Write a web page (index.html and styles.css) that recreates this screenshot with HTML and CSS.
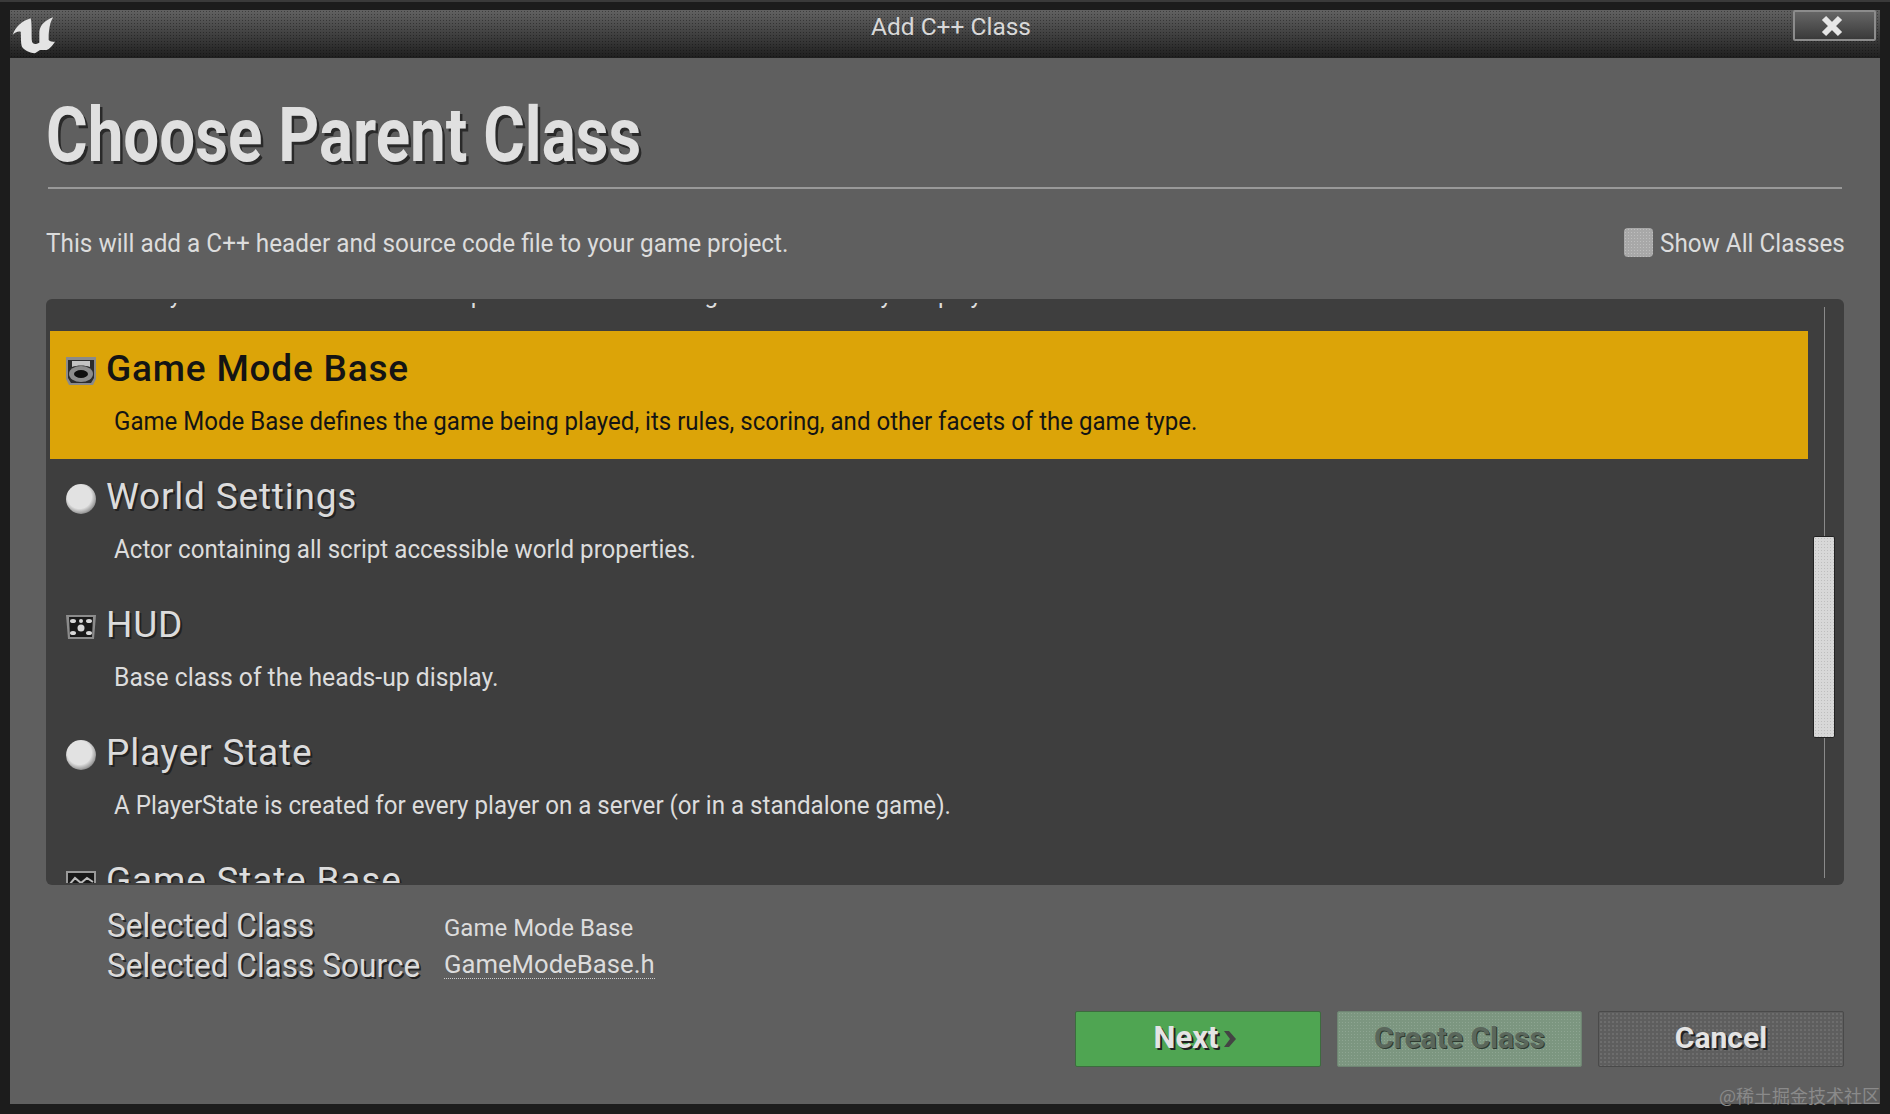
FILE: index.html
```html
<!DOCTYPE html>
<html lang="en">
<head>
    <meta charset="UTF-8">
    <meta name="viewport" content="width=device-width, initial-scale=1.0">
    <title>Add C++ Class</title>
    <link rel="stylesheet" href="styles.css">
</head>
<body>
    <div class="window">
        <div class="titlebar">
            <svg class="logo" viewBox="0 0 132 120">
                <path fill="#e4e4e4" d="M2 60C10 35 30 18 56 10C59 20 59 45 59 70C59 85 65 92 82 83L82 50C84 30 100 15 124 7C114 20 112 40 110 60L110 75C114 80 122 80 129 80C122 92 112 102 104 105L84 105L69 115C50 112 36 105 30 95C26 85 27 60 26 50C18 48 8 52 2 60Z"/>
            </svg>
            <span class="window-title">Add C++ Class</span>
            <button class="close-btn">
                <svg viewBox="0 0 24 24" width="24" height="24"><path d="M4 4L20 20M20 4L4 20" stroke="#e6e6e6" stroke-width="6"/></svg>
            </button>
        </div>

        <div class="content">
            <h1 class="heading"><span>Choose Parent Class</span></h1>
            <div class="divider"></div>

            <div class="intro">
                <p class="intro-text"><span>This will add a C++ header and source code file to your game project.</span></p>
                <label class="show-all"><span class="checkbox"></span><span class="show-all-text">Show All Classes</span></label>
            </div>

            <div class="panel">
                <ul class="class-list">
                    <li class="class-row cut-top">
                        <p class="class-desc"><span>A Player Controller is an actor responsible for controlling a Pawn used by the player.</span></p>
                    </li>
                    <li class="class-row selected">
                        <div class="class-head">
                            <svg class="class-icon" viewBox="0 0 32 30">
                                <path fill="#8a8a8a" d="M1 1H31V23L28 29H4L1 23Z"/>
                                <path fill="#2c2c2c" d="M3 4H29V22L26 27H6L3 22Z"/>
                                <path fill="#c4c4c4" d="M7 5H25V11C20 9 12 9 7 11Z"/>
                                <ellipse cx="16" cy="18" rx="12" ry="8" fill="#8c8c8c"/>
                                <ellipse cx="16" cy="18" rx="7" ry="4" fill="#0e0e0e"/>
                            </svg>
                            <h3 class="class-name">Game Mode Base</h3>
                        </div>
                        <p class="class-desc"><span>Game Mode Base defines the game being played, its rules, scoring, and other facets of the game type.</span></p>
                    </li>
                    <li class="class-row">
                        <div class="class-head">
                            <span class="ball-icon"></span>
                            <h3 class="class-name">World Settings</h3>
                        </div>
                        <p class="class-desc"><span>Actor containing all script accessible world properties.</span></p>
                    </li>
                    <li class="class-row">
                        <div class="class-head">
                            <svg class="class-icon" viewBox="0 0 32 30">
                                <path fill="#8c8c8c" d="M1 3H31L29 27H3Z"/>
                                <path fill="#1a1a1a" d="M4 5H28L27 25H5Z"/>
                                <g fill="#d8d8d8">
                                    <ellipse cx="8" cy="9" rx="3" ry="2"/>
                                    <ellipse cx="16" cy="9" rx="2" ry="2"/>
                                    <ellipse cx="24" cy="9" rx="3" ry="2"/>
                                    <ellipse cx="16" cy="16" rx="3.5" ry="3.5"/>
                                    <ellipse cx="8" cy="21" rx="3" ry="2"/>
                                    <ellipse cx="24" cy="21" rx="3" ry="2"/>
                                </g>
                            </svg>
                            <h3 class="class-name">HUD</h3>
                        </div>
                        <p class="class-desc hud-desc"><span>Base class of the heads-up display.</span></p>
                    </li>
                    <li class="class-row">
                        <div class="class-head">
                            <span class="ball-icon"></span>
                            <h3 class="class-name">Player State</h3>
                        </div>
                        <p class="class-desc"><span>A PlayerState is created for every player on a server (or in a standalone game).</span></p>
                    </li>
                    <li class="class-row">
                        <div class="class-head">
                            <svg class="class-icon" viewBox="0 0 32 30">
                                <path fill="#999" d="M1 3H31V27H1Z"/>
                                <path fill="#181818" d="M3 5H29V25H3Z"/>
                                <path fill="none" stroke="#bbb" stroke-width="2" d="M4 17L10 10L16 15L22 10L28 14"/>
                            </svg>
                            <h3 class="class-name">Game State Base</h3>
                        </div>
                    </li>
                </ul>
                <div class="scroll-track"></div>
                <div class="scroll-thumb"></div>
            </div>

            <div class="summary">
                <div class="summary-labels">
                    <div class="summary-label"><span>Selected Class</span></div>
                    <div class="summary-label"><span>Selected Class Source</span></div>
                </div>
                <div class="summary-values">
                    <div class="summary-value">Game Mode Base</div>
                    <div class="summary-value source-link">GameModeBase.h</div>
                </div>
            </div>

            <div class="actions">
                <button class="action next">Next<svg class="next-arrow" viewBox="0 0 14 18" width="16" height="18"><path d="M1 1H6L13 9L6 17H1L7 9Z" fill="#444"/></svg></button>
                <button class="action create">Create Class</button>
                <button class="action cancel">Cancel</button>
            </div>
        </div>
        <div class="watermark">@稀土掘金技术社区</div>
    </div>
</body>
</html>
```

FILE: styles.css
```css
* {
    box-sizing: border-box;
}
html, body {
    margin: 0;
    height: 100%;
}
body {
    background-color: #1c1c1c;
    font-family: Roboto, "Noto Sans CJK SC", sans-serif;
    color: #dcdcdc;
    overflow: hidden;
}
.window {
    position: relative;
    height: 1114px;
    border-top: 2px solid #3a3a3a;
    padding: 8px 10px 10px 10px;
}

/* title bar */
.titlebar {
    position: relative;
    height: 48px;
    display: flex;
    align-items: center;
    justify-content: center;
    padding: 0 0 16px 12px;
    background-image:
        radial-gradient(circle, rgba(0, 0, 0, .35) 0.7px, transparent 0.8px),
        linear-gradient(#626262, #444 45%, #1e1e1e);
    background-size: 3px 3px, 100% 100%;
}
.logo {
    position: absolute;
    left: 2px;
    top: 5px;
    width: 44px;
    height: 40px;
}
.window-title {
    font-size: 24.5px;
    color: #d8d8d8;
}
.close-btn {
    position: absolute;
    right: 4px;
    top: 0;
    width: 83px;
    height: 31px;
    padding: 0 5px 0 0;
    display: flex;
    align-items: center;
    justify-content: center;
    border: 2px solid #8c8c8c;
    border-radius: 2px;
    background: linear-gradient(#666, #3a3a3a);
}

/* main area */
.content {
    height: 1046px;
    background-color: #5f5f5f;
    padding: 0 36px 0 36px;
}
.heading {
    margin: 0;
    padding-top: 39px;
    height: 129px;
    line-height: 76px;
    font-size: 76px;
    font-weight: 700;
    color: #e0e0e0;
    text-shadow: 3px 3px 0 #2a2a2a;
    white-space: nowrap;
}
.heading span {
    display: inline-block;
    transform: scaleX(.838);
    transform-origin: left center;
}
.divider {
    height: 2px;
    margin: 0 2px;
    background-color: #999;
}
.intro {
    display: flex;
    justify-content: space-between;
    align-items: center;
    height: 110px;
    padding-bottom: 3px;
}
.intro-text {
    margin: 0;
    font-size: 26px;
    white-space: nowrap;
}
.intro-text span {
    display: inline-block;
    transform: scaleX(.935);
    transform-origin: left center;
}
.show-all {
    display: flex;
    align-items: center;
    gap: 7px;
    margin-right: 2px;
    font-size: 26px;
}
.show-all-text {
    display: inline-block;
    width: 182px;
    white-space: nowrap;
    transform: scaleX(.933);
    transform-origin: left center;
}
.checkbox {
    width: 29px;
    height: 29px;
    border-radius: 4px;
    background-color: #a8a8a8;
    background-image: radial-gradient(circle, rgba(255, 255, 255, .25) 0.7px, transparent 0.8px);
    background-size: 3px 3px;
}

/* class list */
.panel {
    position: relative;
    height: 586px;
    overflow: hidden;
    background-color: #3e3e3e;
    border-radius: 6px;
}
.class-list {
    list-style: none;
    margin: 4px 0 0 0;
    padding: 0 0 0 4px;
    width: 1762px;
    height: 580px;
    overflow: hidden;
}
.class-row {
    height: 128px;
    padding: 14px 0 0 15px;
    overflow: hidden;
}
.cut-top {
    height: 28px;
    padding: 0 0 0 15px;
}
.cut-top .class-desc {
    margin-top: -23px;
}
.class-row.selected {
    background-color: #dca408;
    color: #141414;
}
.class-head {
    display: flex;
    align-items: center;
    height: 46px;
    gap: 9px;
}
.class-icon {
    width: 32px;
    height: 30px;
    flex: none;
    margin-top: 5px;
}
.ball-icon {
    flex: none;
    width: 30px;
    height: 30px;
    margin: 5px 1px 0 1px;
    border-radius: 50%;
    background: radial-gradient(circle at 45% 42%, #e2e2e2 50%, #9a9a9a 70%, #222 92%);
}
.class-name {
    margin: 0;
    font-size: 37px;
    font-weight: 400;
    letter-spacing: .8px;
    white-space: nowrap;
    text-shadow: 2px 2px 0 #222;
}
.selected .class-name {
    font-weight: 500;
    text-shadow: none;
}
.class-desc {
    margin: 16px 0 0 49px;
    font-size: 25px;
    white-space: nowrap;
}
.class-desc span {
    display: inline-block;
    transform: scaleX(.966);
    transform-origin: left center;
}
.selected .class-desc span {
    transform: scaleX(.962);
}
.hud-desc span {
    transform: scaleX(.988);
}
.scroll-track {
    position: absolute;
    left: 1778px;
    top: 8px;
    width: 1px;
    height: 571px;
    background-color: #8a8a8a;
}
.scroll-thumb {
    position: absolute;
    left: 1767px;
    top: 237px;
    width: 22px;
    height: 202px;
    border: 1px solid #222;
    border-radius: 2px;
    background-color: #d8d8d8;
    background-image: radial-gradient(circle, rgba(0, 0, 0, .12) 0.7px, transparent 0.8px);
    background-size: 3px 3px;
}

/* selected class summary */
.summary {
    display: flex;
    padding: 20px 0 0 61px;
}
.summary-labels {
    width: 337px;
}
.summary-label {
    height: 40px;
    font-size: 34px;
    line-height: 40px;
    white-space: nowrap;
    text-shadow: 2px 2px 0 #222;
}
.summary-label span {
    display: inline-block;
    transform: scaleX(.93);
    transform-origin: left center;
}
.summary-values {
    display: flex;
    flex-direction: column;
    align-items: flex-start;
    padding-top: 5px;
}
.summary-value {
    height: 36px;
    font-size: 24px;
    line-height: 36px;
    white-space: nowrap;
}
.source-link {
    height: 33px;
    font-size: 25.7px;
    line-height: 36px;
    border-bottom: 1px dotted #ccc;
}

/* buttons */
.actions {
    display: flex;
    justify-content: flex-end;
    gap: 16px;
    margin-top: 26px;
}
.action {
    width: 245px;
    height: 56px;
    padding: 0 0 3px 0;
    border: 1px solid #4a4a4a;
    border-radius: 2px;
    font-family: Roboto, sans-serif;
    font-size: 30px;
    font-weight: 700;
    color: #e4e4e4;
    text-shadow: 2px 2px 0 #222;
    display: flex;
    align-items: center;
    justify-content: center;
    gap: 4px;
}
.next {
    width: 246px;
    padding-right: 4px;
    font-size: 31px;
    background-color: #4fa552;
    border-color: #3c6c3e;
}
.next-arrow {
    margin-top: 3px;
}
.create {
    background-color: #7c9680;
    background-image: radial-gradient(circle, rgba(255, 255, 255, .14) 0.7px, transparent 0.8px);
    background-size: 3px 3px;
    color: #5a675c;
    text-shadow: 1px 1px 0 #2e3a30;
    border-color: #6f8573;
}
.cancel {
    width: 246px;
    background-color: #5e5e5e;
    background-image: radial-gradient(circle, rgba(255, 255, 255, .1) 0.7px, transparent 0.8px);
    background-size: 4px 4px;
}
.watermark {
    position: absolute;
    right: 10px;
    bottom: 6px;
    font-size: 18px;
    color: #8a8a8a;
    font-family: "Noto Sans CJK SC", sans-serif;
}
```
